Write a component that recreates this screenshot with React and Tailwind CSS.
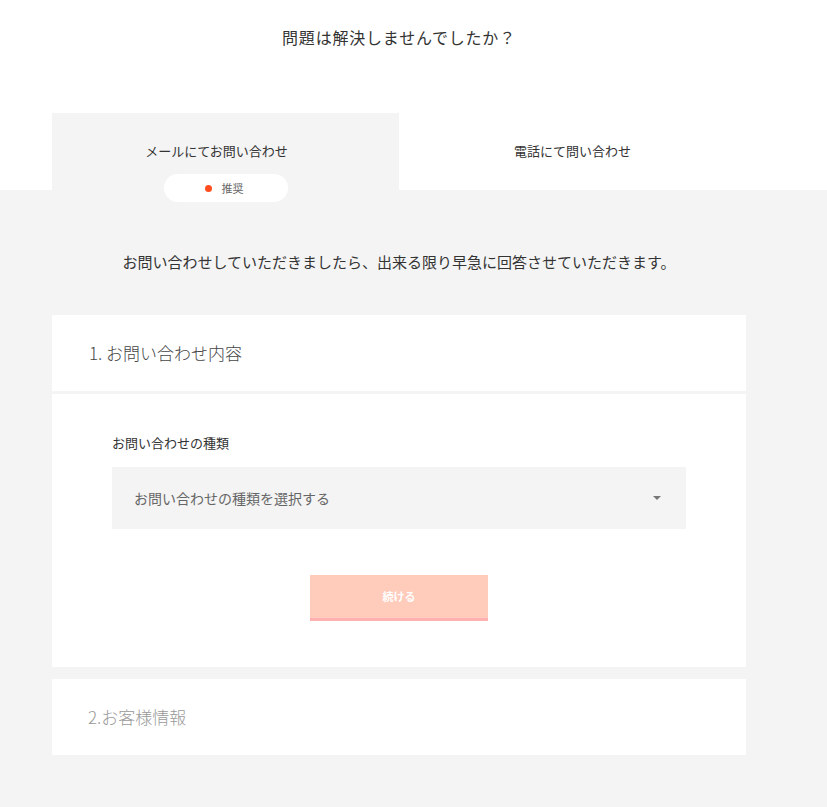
import { useState } from 'react';

const font = { fontFamily: '"Noto Sans CJK JP", "Noto Sans", sans-serif' };

export default function App() {
  const [tab, setTab] = useState('mail');
  const [kind, setKind] = useState('');

  return (
    <div className="min-h-screen bg-[#f4f4f4] text-[#333]" style={font}>
      {/* Header */}
      <div className="bg-white">
        <div className="w-[694px] ml-[52px]">
          <h1 className="pt-[25px] text-center text-[16px] leading-[24px] text-[#333] tracking-[0.05em]">
            問題は解決しませんでしたか？
          </h1>

          {/* Tabs */}
          <div className="mt-[64px] grid grid-cols-2 h-[77px]">
            <button
              onClick={() => setTab('mail')}
              className={`relative flex items-start justify-center pt-[28px] pr-[18px] text-[13px] leading-[20px] text-[#333] ${
                tab === 'mail' ? 'bg-[#f4f4f4]' : 'bg-white'
              }`}
            >
              メールにてお問い合わせ
              <span className="absolute left-[112px] top-[61px] flex h-[28px] w-[124px] items-center justify-center gap-[10px] rounded-full bg-white pr-[4px] text-[11px] text-[#666]">
                <span className="h-[7px] w-[7px] rounded-full bg-[#ff4d1f]" />
                推奨
              </span>
            </button>
            <button
              onClick={() => setTab('tel')}
              className={`flex items-start justify-center pt-[28px] text-[13px] leading-[20px] text-[#333] ${
                tab === 'tel' ? 'bg-[#f4f4f4]' : 'bg-white'
              }`}
            >
              電話にて問い合わせ
            </button>
          </div>
        </div>
      </div>

      {/* Body */}
      <div className="w-[694px] ml-[52px] pb-[52px]">
        <p className="pt-[61px] text-center text-[15px] leading-[22px] text-[#333]">
          お問い合わせしていただきましたら、出来る限り早急に回答させていただきます。
        </p>

        <div className="mt-[42px] flex h-[76px] items-center bg-white pl-[37px]">
          <h2 className="text-[17px] font-light text-[#444]">1. お問い合わせ内容</h2>
        </div>

        <div className="mt-[3px] bg-white px-[60px] pt-[39px] pb-[46px]">
          <label className="block text-[13px] leading-[20px] text-[#333]">お問い合わせの種類</label>
          <div className="relative mt-[14px]">
            <select
              value={kind}
              onChange={(e) => setKind(e.target.value)}
              className="h-[62px] w-full appearance-none bg-[#f4f4f4] pl-[22px] pr-[40px] text-[14px] text-[#666] outline-none"
              style={font}
            >
              <option value="">お問い合わせの種類を選択する</option>
              <option value="order">ご注文について</option>
              <option value="other">その他</option>
            </select>
            <span className="pointer-events-none absolute right-[25px] top-[29px] h-0 w-0 border-x-[4px] border-t-[4px] border-x-transparent border-t-[#777]" />
          </div>

          <div className="mt-[46px] flex justify-center">
            <button
              disabled={!kind}
              className="h-[46px] w-[178px] border-b-[3px] border-[#ffb1b1] bg-[#ffcbbb] text-[11px] font-bold text-white"
            >
              続ける
            </button>
          </div>
        </div>

        <div className="mt-[12px] flex h-[76px] items-center bg-white pl-[36px]">
          <h2 className="text-[17px] font-light text-[#999]">2.お客様情報</h2>
        </div>
      </div>
    </div>
  );
}
